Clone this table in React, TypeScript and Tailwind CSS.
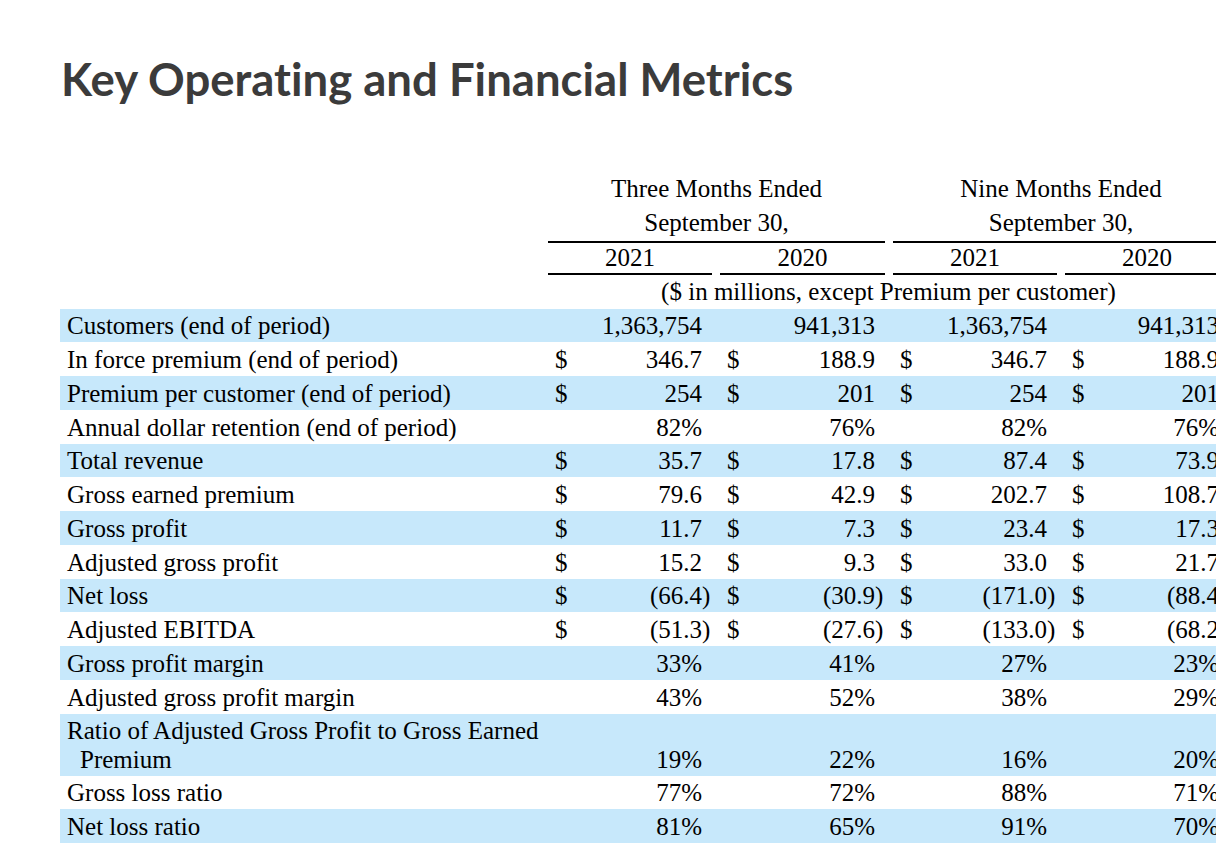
import React from 'react'

type Cell = { v: string; d?: boolean }
type Row = { label: string; cells: Cell[]; tall?: boolean }

const money = (a: string, b: string, c: string, d: string): Cell[] =>
  [a, b, c, d].map((v) => ({ v, d: true }))
const plain = (a: string, b: string, c: string, d: string): Cell[] =>
  [a, b, c, d].map((v) => ({ v }))

const rows: Row[] = [
  { label: 'Customers (end of period)', cells: plain('1,363,754', '941,313', '1,363,754', '941,313') },
  { label: 'In force premium (end of period)', cells: money('346.7', '188.9', '346.7', '188.9') },
  { label: 'Premium per customer (end of period)', cells: money('254', '201', '254', '201') },
  { label: 'Annual dollar retention (end of period)', cells: plain('82%', '76%', '82%', '76%') },
  { label: 'Total revenue', cells: money('35.7', '17.8', '87.4', '73.9') },
  { label: 'Gross earned premium', cells: money('79.6', '42.9', '202.7', '108.7') },
  { label: 'Gross profit', cells: money('11.7', '7.3', '23.4', '17.3') },
  { label: 'Adjusted gross profit', cells: money('15.2', '9.3', '33.0', '21.7') },
  { label: 'Net loss', cells: money('(66.4)', '(30.9)', '(171.0)', '(88.4)') },
  { label: 'Adjusted EBITDA', cells: money('(51.3)', '(27.6)', '(133.0)', '(68.2)') },
  { label: 'Gross profit margin', cells: plain('33%', '41%', '27%', '23%') },
  { label: 'Adjusted gross profit margin', cells: plain('43%', '52%', '38%', '29%') },
  { label: 'Ratio of Adjusted Gross Profit to Gross Earned Premium', cells: plain('19%', '22%', '16%', '20%'), tall: true },
  { label: 'Gross loss ratio', cells: plain('77%', '72%', '88%', '71%') },
  { label: 'Net loss ratio', cells: plain('81%', '65%', '91%', '70%') },
]

const cols = 'grid grid-cols-[488px_164px_8px_165px_8px_164px_8px_164px]'

function ValueCell({ cell, col }: { cell: Cell; col: number }) {
  const neg = cell.v.endsWith(')')
  const text = neg ? cell.v.slice(0, -1) : cell.v
  return (
    <div
      className="flex items-end justify-between whitespace-nowrap pl-[7px] pb-[2px]"
      style={{ gridColumn: col * 2 + 2 }}
    >
      <span>{cell.d ? '$' : ''}</span>
      <span className="flex">
        <span>{text}</span>
        <span className="w-[10px]">{neg ? ')' : ''}</span>
      </span>
    </div>
  )
}

export default function App() {
  return (
    <div className="h-[860px] w-[1216px] overflow-hidden bg-white">
      <h1 className="pl-[61px] pt-[56px] font-['Lato',sans-serif] text-[45.5px] font-bold leading-none text-[#3b3b3b] [font-variant-ligatures:none]">
        Key Operating and Financial Metrics
      </h1>

      <div className="ml-[60px] mt-[70px] w-[1169px] font-['Liberation_Serif','Times_New_Roman',serif] text-[25px] leading-[28px] text-black">
        <div className={`${cols} h-[34px] items-center`}>
          <div className="col-start-2 col-span-3 text-center">Three Months Ended</div>
          <div className="col-start-6 col-span-3 whitespace-nowrap text-center">Nine Months Ended</div>
        </div>
        <div className={`${cols} h-[37px]`}>
          <div className="col-start-2 col-span-3 flex items-center justify-center border-b-2 border-black">September 30,</div>
          <div className="col-start-6 col-span-3 flex items-center justify-center border-b-2 border-black">September 30,</div>
        </div>
        <div className={`${cols} h-[32px]`}>
          <div className="col-start-2 flex items-center justify-center border-b-2 border-black">2021</div>
          <div className="col-start-4 flex items-center justify-center border-b-2 border-black">2020</div>
          <div className="col-start-6 flex items-center justify-center border-b-2 border-black">2021</div>
          <div className="col-start-8 flex items-center justify-center border-b-2 border-black">2020</div>
        </div>
        <div className={`${cols} h-[34px] items-center`}>
          <div className="col-start-2 col-span-7 whitespace-nowrap text-center">($ in millions, except Premium per customer)</div>
        </div>

        {rows.map((r, i) => (
          <div
            key={r.label}
            className={`${cols} ${r.tall ? 'h-[62px]' : 'h-[33.75px]'} ${i % 2 === 0 ? 'bg-[#c7e8fb]' : 'bg-white'}`}
          >
            <div className={`pl-[20px] -indent-[13px] ${r.tall ? 'pt-[2px] leading-[29px]' : 'flex items-end pb-[2px]'}`}>
              {r.label}
            </div>
            {r.cells.map((c, j) => (
              <ValueCell key={j} cell={c} col={j} />
            ))}
          </div>
        ))}
      </div>
    </div>
  )
}
